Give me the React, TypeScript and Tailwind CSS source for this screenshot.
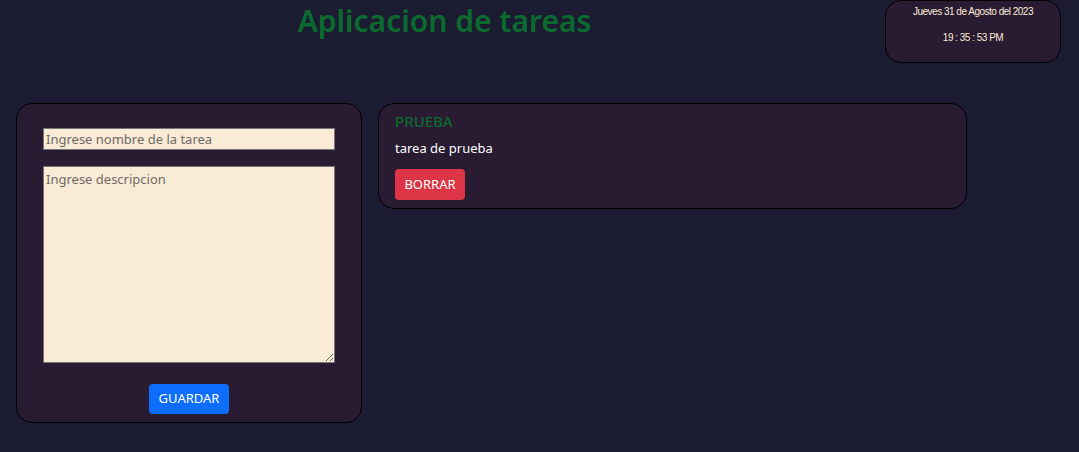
import React from 'react';

const tasks = [{ id: 1, title: 'PRUEBA', description: 'tarea de prueba' }];

const App = () => {
    return (
        <div className="min-h-screen w-[1079px] h-[452px] bg-[#1b1c31] font-['Noto_Sans','Open_Sans',sans-serif] text-white">
            {/* header */}
            <div className="flex items-start">
                <div className="w-[885px] flex justify-center pl-[4px]">
                    <h1 className="text-[30px] leading-[42px] font-semibold text-[#0b6b2f]">Aplicacion de tareas</h1>
                </div>
                <div className="w-[176px] h-[63px] rounded-[16px] border border-black bg-[#291b31] flex flex-col items-center text-[#faebd7] font-['Liberation_Sans',sans-serif] text-[10px] tracking-[-0.5px]">
                    <p className="mt-[3px]">Jueves 31 de Agosto del 2023</p>
                    <p className="mt-[11px]">19 : 35 : 53 PM</p>
                </div>
            </div>

            <div className="flex items-start gap-4 pl-4 mt-[40px]">
                {/* form */}
                <form className="w-[346px] h-[320px] rounded-[16px] border border-black bg-[#291b31] flex flex-col items-center pt-[24px]">
                    <input
                        placeholder="Ingrese nombre de la tarea"
                        className="w-[292px] h-[22px] bg-[#faebd7] border border-[#767676] px-[2px] text-[13px] text-black placeholder:text-[#6f6a66] outline-none"
                    />
                    <textarea
                        placeholder="Ingrese descripcion"
                        className="w-[292px] h-[197px] mt-[16px] bg-[#faebd7] border border-[#767676] px-[2px] py-0 text-[13px] leading-[24px] text-black placeholder:text-[#6f6a66] outline-none"
                    />
                    <button type="button" className="mt-[21px] w-[80px] h-[30px] rounded-[4px] bg-[#0d6efd] text-[13px] text-white">GUARDAR</button>
                </form>

                {/* tasks */}
                {tasks.map((task) => (
                    <div key={task.id} className="w-[589px] h-[106px] rounded-[16px] border border-black bg-[#291b31] px-4 pt-[7px]">
                        <h3 className="text-[15px] leading-[20px] font-medium text-[#0b6b2f]">{task.title}</h3>
                        <p className="mt-[8px] text-[13px] leading-[18px] text-white">{task.description}</p>
                        <button type="button" className="mt-[12px] w-[70px] h-[31px] rounded-[4px] bg-[#dc3545] text-[13px] text-white">BORRAR</button>
                    </div>
                ))}
            </div>
        </div>
    );
};

export default App;
